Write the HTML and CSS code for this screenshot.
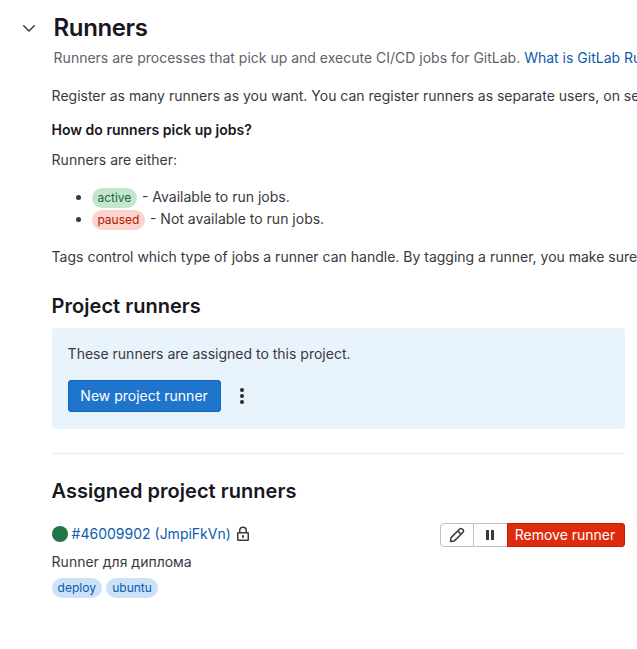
FILE: index.html
```html
<!DOCTYPE html>
<html lang="en">
<head>
<meta charset="utf-8">
<title>Runners</title>
<link rel="stylesheet" href="styles.css">
</head>
<body>
<main class="settings">
  <header class="section-header">
    <button class="toggle" aria-label="Collapse">
      <svg width="16" height="16" viewBox="0 0 16 16" fill="none" stroke="currentColor" stroke-width="1.5" stroke-linecap="round" stroke-linejoin="round"><path d="M2.75 5.75 8 11l5.25-5.25"/></svg>
    </button>
    <div class="heading">
      <h1 class="title">Runners</h1>
      <p class="subtitle">Runners are processes that pick up and execute CI/CD jobs for GitLab. <a href="#">What is GitLab Runner?</a></p>
    </div>
  </header>
  <section class="content">
    <p class="intro">Register as many runners as you want. You can register runners as separate users, on separate servers.</p>
    <h4 class="question">How do runners pick up jobs?</h4>
    <p class="either">Runners are either:</p>
    <ul class="states">
      <li><span class="badge success">active</span><span class="state-text">- Available to run jobs.</span></li>
      <li><span class="badge danger">paused</span><span class="state-text">- Not available to run jobs.</span></li>
    </ul>
    <p class="tags-note">Tags control which type of jobs a runner can handle. By tagging a runner, you make sure shared runners only handle the jobs.</p>
    <h2 class="subheading">Project runners</h2>
    <div class="panel">
      <p class="panel-text">These runners are assigned to this project.</p>
      <div class="panel-actions">
        <button class="btn-primary">New project runner</button>
        <button class="more" aria-label="More actions">
          <svg width="16" height="16" viewBox="0 0 16 16" fill="currentColor"><circle cx="8" cy="2" r="2"/><circle cx="8" cy="8" r="2"/><circle cx="8" cy="14" r="2"/></svg>
        </button>
      </div>
    </div>
    <hr class="divider">
    <h2 class="subheading assigned">Assigned project runners</h2>
    <div class="runner">
      <div class="runner-info">
        <div class="runner-name">
          <span class="status"></span>
          <a href="#">#46009902 (JmpiFkVn)</a>
          <svg class="lock" width="16" height="16" viewBox="0 0 16 16" fill="none" stroke="currentColor" stroke-width="1.5"><path d="M4.75 7V4.5a3.25 3.25 0 0 1 6.5 0V7"/><rect x="2.75" y="6.75" width="10.5" height="7.5" rx=".5"/><path d="M8 9.25v2.5" stroke-width="2"/></svg>
        </div>
        <p class="description">Runner для диплома</p>
        <div class="tags"><span class="badge info">deploy</span><span class="badge info">ubuntu</span></div>
      </div>
      <div class="btn-group">
        <button class="btn-icon edit" aria-label="Edit">
          <svg width="16" height="16" viewBox="0 0 16 16" fill="none" stroke="currentColor" stroke-width="1.5" stroke-linejoin="round"><path d="m1.5 14.5.6-3.9 8.6-8.6a1.75 1.75 0 0 1 2.5 0l.8.8a1.75 1.75 0 0 1 0 2.5l-8.6 8.6zM8.8 3.9l3.3 3.3"/></svg>
        </button>
        <button class="btn-icon pause" aria-label="Pause">
          <svg width="16" height="16" viewBox="0 0 16 16" fill="currentColor"><rect x="4" y="3" width="3" height="10" rx=".5"/><rect x="9" y="3" width="3" height="10" rx=".5"/></svg>
        </button>
        <button class="btn-danger">Remove runner</button>
      </div>
    </div>
  </section>
</main>
</body>
</html>
```

FILE: styles.css
```css
* { box-sizing: border-box; }
body {
  margin: 0;
  overflow: hidden;
  background: #fff;
  color: #3a383f;
  font: 14px/20px Inter, "Noto Sans", sans-serif;
}
h1, h2, h4, p, ul { margin: 0; }
button { margin: 0; padding: 0; border: 0; background: none; font: inherit; color: inherit; }
svg { display: block; flex: none; }
a { color: #0b5cad; text-decoration: none; }
.settings { width: 637px; height: 649px; overflow: hidden; }
.section-header { display: flex; padding-top: 12px; height: 86px; }
.toggle { width: 16px; height: 32px; margin-left: 21px; display: flex; align-items: center; }
.heading { margin-left: 16.6px; white-space: nowrap; }
.title { font-size: 24px; line-height: 32px; font-weight: 600; letter-spacing: -0.4px; color: #18171d; }
.subtitle { margin-top: 4px; color: #626168; }
.content { padding: 0 12px 0 51.6px; }
.intro, .tags-note { white-space: nowrap; }
.question { margin-top: 14px; font-size: 14px; font-weight: 600; color: #18171d; }
.either { margin-top: 10px; }
.states { margin-top: 16px; padding-left: 40px; }
.states li { height: 22px; line-height: 22px; }
.states li::marker { color: #3a383f; }
.badge { display: inline-block; height: 20px; padding: 0 6px; border-radius: 10px; font-size: 12px; line-height: 20px; }
.success { background: #c3e6cd; color: #24663b; }
.danger { background: #fdd4cd; color: #ae1800; }
.success, .danger { padding: 0 5.8px; }
.info { background: #cbe2f9; color: #0b5cad; }
.state-text { margin-left: 4.8px; }
.tags-note { margin-top: 17px; }
.subheading { margin-top: 27px; font-size: 20px; line-height: 24px; font-weight: 600; letter-spacing: 0.03px; color: #18171d; }
.panel { margin-top: 10px; height: 101px; padding: 16px; border-radius: 4px; background: #e9f3fc; }
.panel-actions { display: flex; margin-top: 16px; }
.btn-primary { width: 153px; height: 32px; border-radius: 4px; background: #1f75cb; box-shadow: inset 0 0 0 1px #1068bf; color: #fff; }
.more { display: flex; align-items: center; justify-content: center; width: 16px; height: 32px; margin-left: 13.4px; color: #28272d; }
.divider { height: 1px; margin: 24px 0 0; border: 0; background: #ececef; }
.assigned { margin-top: 25px; }
.runner { display: flex; justify-content: space-between; margin-top: 20px; }
.runner-name { display: flex; align-items: center; height: 22px; }
.status { width: 16px; height: 16px; margin-right: 4px; border-radius: 50%; background: #217645; }
.lock { margin-left: 4.4px; }
.description { margin-top: 7px; }
.tags { display: flex; gap: 4.3px; margin-top: 6px; }
.btn-group { display: flex; height: 24px; }
.btn-icon { display: flex; align-items: center; justify-content: center; height: 24px; border: 1px solid #bfbfc3; }
.edit { width: 34px; border-radius: 4px 0 0 4px; }
.pause { width: 33px; border-width: 1px 0; padding-right: 1px; }
.btn-danger { width: 118px; height: 24px; padding-right: 2px; border-radius: 0 4px 4px 0; background: #dd2b0e; box-shadow: inset 0 0 0 1px #c91c00; color: #fff; }
```
